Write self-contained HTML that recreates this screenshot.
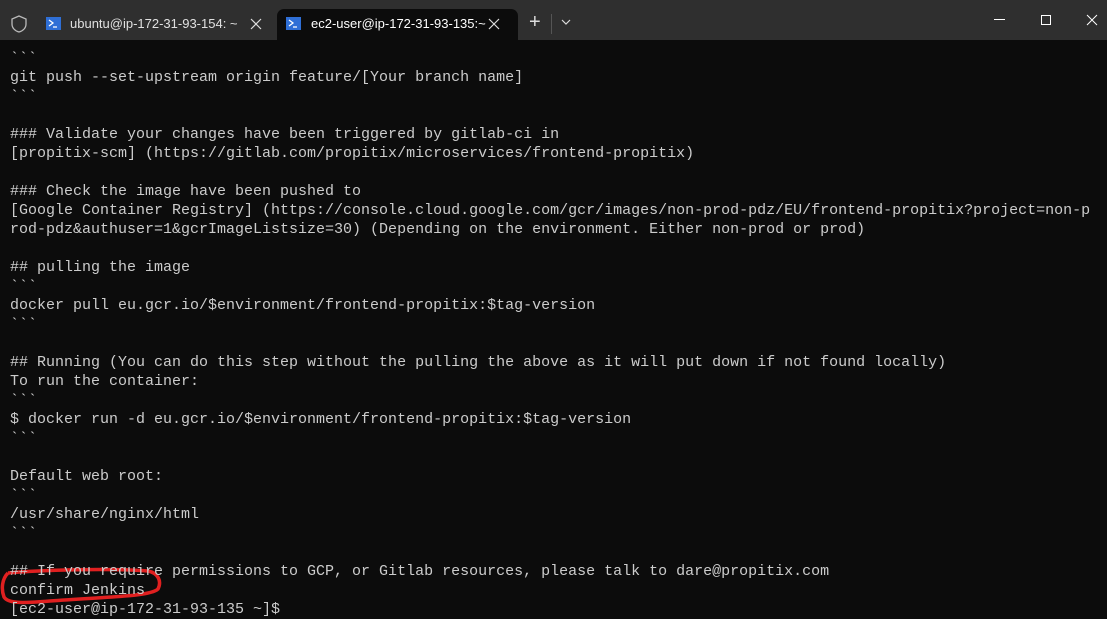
<!DOCTYPE html>
<html><head><meta charset="utf-8"><style>
html,body{margin:0;padding:0;width:1107px;height:619px;overflow:hidden;background:#0c0c0c;}
.bar{position:absolute;left:0;top:0;width:1107px;height:40px;background:#2f2f2f;}
.tab{position:absolute;top:9px;height:31px;font:13px "Liberation Sans",sans-serif;color:#e0e0e0;}
.active{background:#0c0c0c;border-radius:7px 7px 0 0;}
.term{position:absolute;left:10px;top:49px;width:1100px;font-family:"Liberation Mono",monospace;font-size:15px;line-height:19px;color:#cccccc;}
.term div{height:19px;white-space:pre;}
</style></head><body>
<div class="bar"></div>
<svg style="position:absolute;left:10px;top:14px" width="18" height="20" viewBox="0 0 18 20"><path d="M9 2 L16 5 V10 C16 14 13 17 9 18 C5 17 2 14 2 10 V5 Z" fill="none" stroke="#bbb" stroke-width="1.3"/></svg>
<div class="tab" style="left:36px;width:236px;">
 <svg style="position:absolute;left:10px;top:8px" width="15" height="13"><rect width="15" height="13" fill="#2f6fd6"/><path d="M3 3 L7 6 L3 9 M7 10 H11" stroke="#fff" stroke-width="1.3" fill="none"/></svg>
 <span style="position:absolute;left:34px;top:7px">ubuntu@ip-172-31-93-154: ~</span>
 <svg style="position:absolute;left:214px;top:9px" width="12" height="12"><path d="M1 1 L11 11 M11 1 L1 11" stroke="#ddd" stroke-width="1.2"/></svg>
</div>
<div class="tab active" style="left:277px;width:241px;">
 <svg style="position:absolute;left:9px;top:8px" width="15" height="13"><rect width="15" height="13" fill="#2f6fd6"/><path d="M3 3 L7 6 L3 9 M7 10 H11" stroke="#fff" stroke-width="1.3" fill="none"/></svg>
 <span style="position:absolute;left:34px;top:7px;color:#fff">ec2-user@ip-172-31-93-135:~</span>
 <svg style="position:absolute;left:211px;top:9px" width="12" height="12"><path d="M1 1 L11 11 M11 1 L1 11" stroke="#ddd" stroke-width="1.2"/></svg>
</div>
<div style="position:absolute;left:529px;top:11px;font:20px 'Liberation Sans',sans-serif;color:#ddd">+</div>
<div style="position:absolute;left:551px;top:14px;width:1px;height:20px;background:#555"></div>
<svg style="position:absolute;left:560px;top:18px" width="12" height="8"><path d="M2 2 L6 6 L10 2" fill="none" stroke="#ddd" stroke-width="1.2"/></svg>
<div style="position:absolute;left:994px;top:19px;width:11px;height:1px;background:#fff"></div>
<div style="position:absolute;left:1041px;top:15px;width:8px;height:8px;border:1px solid #fff"></div>
<svg style="position:absolute;left:1086px;top:14px" width="12" height="12"><path d="M1 1 L11 11 M11 1 L1 11" stroke="#fff" stroke-width="1"/></svg>
<svg style="position:absolute;left:0;top:565px" width="170" height="45"><path d="M8 8 C40 5 110 3 148 6 C158 8 162 16 158 24 C150 32 100 32 50 36 C25 38 8 39 4 32 C1 24 2 14 8 8" fill="none" stroke="#e02020" stroke-width="3.5"/></svg>
<div class="term">
<div>&#96;&#96;&#96;</div>
<div>git push --set-upstream origin feature/[Your branch name]</div>
<div>&#96;&#96;&#96;</div>
<div></div>
<div>### Validate your changes have been triggered by gitlab-ci in</div>
<div>[propitix-scm] (https://gitlab.com/propitix/microservices/frontend-propitix)</div>
<div></div>
<div>### Check the image have been pushed to</div>
<div>[Google Container Registry] (https://console.cloud.google.com/gcr/images/non-prod-pdz/EU/frontend-propitix?project=non-p</div>
<div>rod-pdz&amp;authuser=1&amp;gcrImageListsize=30) (Depending on the environment. Either non-prod or prod)</div>
<div></div>
<div>## pulling the image</div>
<div>&#96;&#96;&#96;</div>
<div>docker pull eu.gcr.io/&#36;environment/frontend-propitix:&#36;tag-version</div>
<div>&#96;&#96;&#96;</div>
<div></div>
<div>## Running (You can do this step without the pulling the above as it will put down if not found locally)</div>
<div>To run the container:</div>
<div>&#96;&#96;&#96;</div>
<div>&#36; docker run -d eu.gcr.io/&#36;environment/frontend-propitix:&#36;tag-version</div>
<div>&#96;&#96;&#96;</div>
<div></div>
<div>Default web root:</div>
<div>&#96;&#96;&#96;</div>
<div>/usr/share/nginx/html</div>
<div>&#96;&#96;&#96;</div>
<div></div>
<div>## If you require permissions to GCP, or Gitlab resources, please talk to dare@propitix.com</div>
<div>confirm Jenkins</div>
<div>[ec2-user@ip-172-31-93-135 ~]&#36;</div>
</div>
</body></html>
